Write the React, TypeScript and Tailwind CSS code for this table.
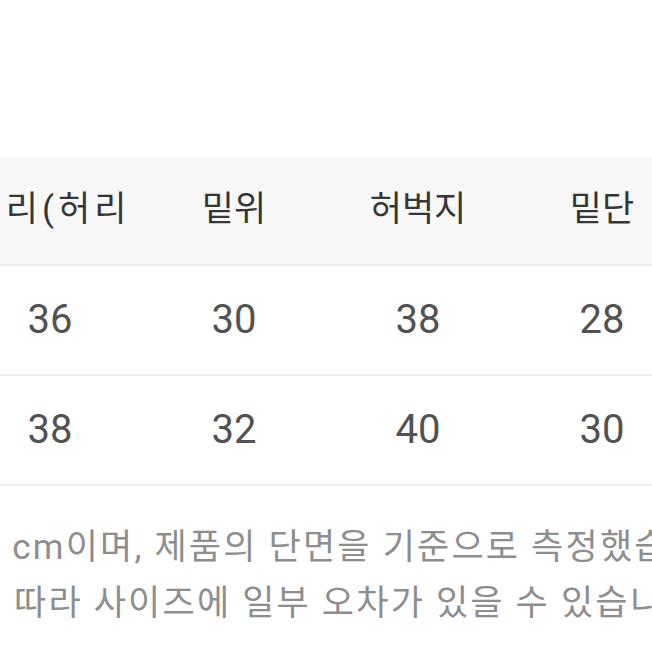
const FONT = "font-['Roboto','Noto_Sans_CJK_KR',sans-serif]"

const HEADERS = ['허리(허리', '밑위', '허벅지', '밑단']
const ROWS = [
  ['36', '30', '38', '28'],
  ['38', '32', '40', '30'],
]

export default function App() {
  return (
    <div className={`h-[652px] w-[652px] overflow-hidden bg-white ${FONT}`}>
      <div className="h-[157px]" />
      {/* size table, wider than the view and cut at the left edge */}
      <div className="ml-[-42px] w-[736px]">
        <div className="flex h-[109px] items-center border-b-2 border-[#ededed] bg-[#f8f8f8]">
          {HEADERS.map((h, i) => (
            <div
              key={h}
              className={`w-[184px] shrink-0 whitespace-nowrap text-center text-[35px] text-[#363636] ${
                i === 0 ? 'tracking-[4px]' : ''
              }`}
            >
              {h}
            </div>
          ))}
        </div>
        {ROWS.map((row, i) => (
          <div
            key={i}
            className="flex h-[110px] items-center border-b-2 border-[#efefef]"
          >
            {row.map((v, j) => (
              <div
                key={j}
                className="w-[184px] shrink-0 text-center text-[40px] text-[#525252]"
              >
                {v}
              </div>
            ))}
          </div>
        ))}
      </div>
      <div className="mt-[44px] flex flex-col gap-[21px] whitespace-nowrap text-[35px] leading-[35px] tracking-[2.2px] text-[#8e8e8e]">
        <div className="ml-[-33px]">는 cm이며, 제품의 단면을 기준으로 측정했습니다.</div>
        <div className="ml-[14px]">따라 사이즈에 일부 오차가 있을 수 있습니다.</div>
      </div>
    </div>
  )
}
